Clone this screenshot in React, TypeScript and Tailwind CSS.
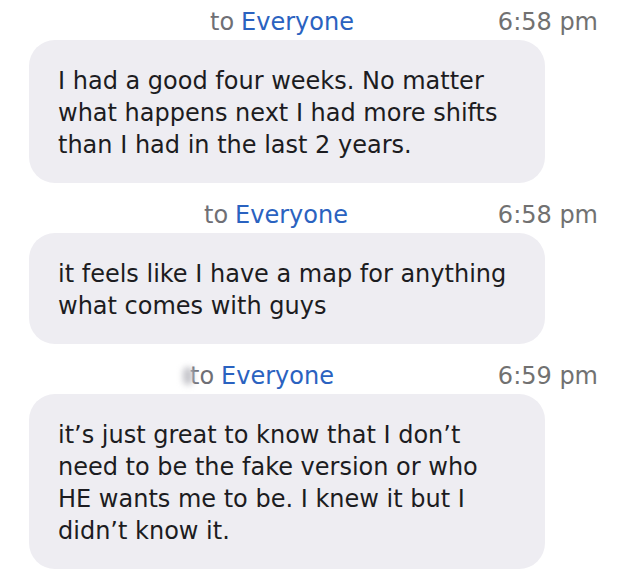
import React from "react";

type Msg = {
  nameWidth: string;
  time: string;
  lines: string[];
  smudge?: boolean;
};

const messages: Msg[] = [
  {
    nameWidth: "w-[210px]",
    time: "6:58 pm",
    lines: [
      "I had a good four weeks. No matter",
      "what happens next I had more shifts",
      "than I had in the last 2 years.",
    ],
  },
  {
    nameWidth: "w-[204px]",
    time: "6:58 pm",
    lines: ["it feels like I have a map for anything", "what comes with guys"],
  },
  {
    nameWidth: "w-[190px]",
    time: "6:59 pm",
    smudge: true,
    lines: [
      "it’s just great to know that I don’t",
      "need to be the fake version or who",
      "HE wants me to be. I knew it but I",
      "didn’t know it.",
    ],
  },
];

function Header({ msg }: { msg: Msg }) {
  return (
    <div className="flex items-center justify-between h-[28px] pr-[33px] text-[24px] leading-[28px]">
      <div className="flex items-center">
        <span className={`${msg.nameWidth} flex justify-end`}>
          {msg.smudge && <span className="block w-[10px] h-[18px] mr-[-3px] bg-[#c4c4ca] blur-[3px] rounded-full" />}
        </span>
        <span className="text-[#6f6f75]">to</span>
        <span className="text-[#2a62c0] ml-[7px]">Everyone</span>
      </div>
      <span className="text-[#717171]">{msg.time}</span>
    </div>
  );
}

export default function App() {
  return (
    <div
      className="bg-white w-[631px] h-[587px] overflow-hidden pt-[8px] flex flex-col gap-[18px]"
      style={{ fontFamily: '"DejaVu Sans", Verdana, sans-serif' }}
    >
      {messages.map((msg, i) => (
        <div key={i} className="flex flex-col gap-[4px]">
          <Header msg={msg} />
          <div className="ml-[29px] w-[516px] rounded-[26px] bg-[#eeedf2] pl-[29px] pt-[25px] pb-[22px] text-[24px] leading-[32px] text-[#1c1c21]">
            {msg.lines.map((l, j) => (
              <div key={j} className="whitespace-nowrap">{l}</div>
            ))}
          </div>
        </div>
      ))}
    </div>
  );
}
